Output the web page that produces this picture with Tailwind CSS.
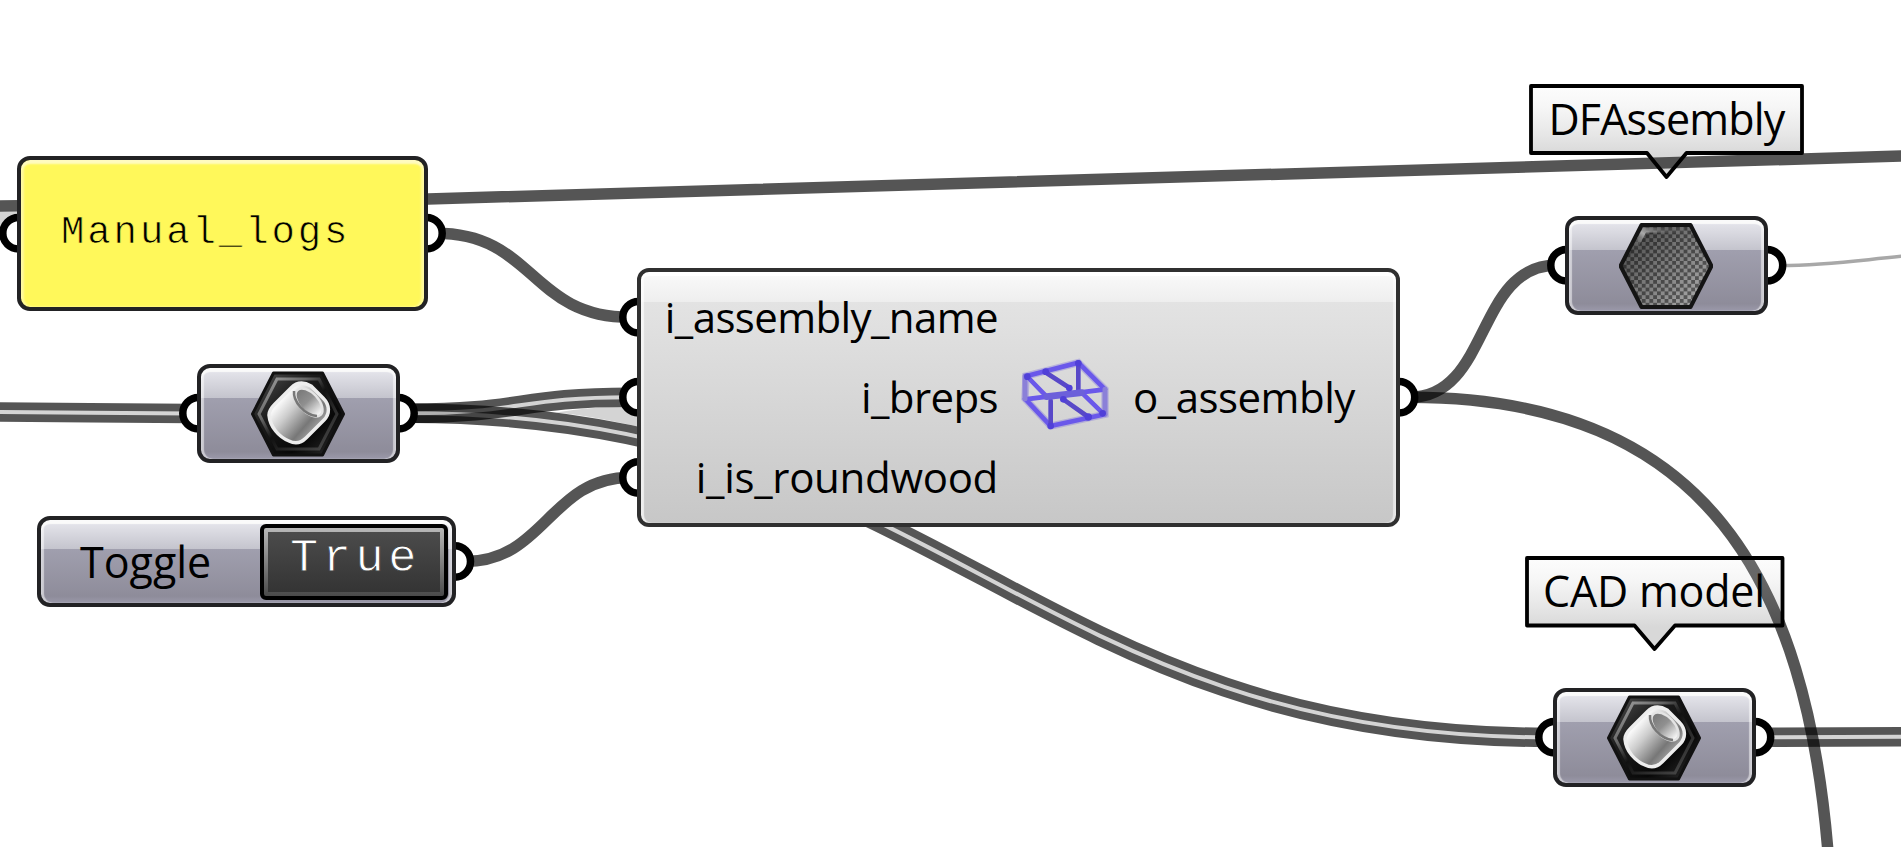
<!DOCTYPE html>
<html lang="en">
<head>
<meta charset="utf-8">
<title>Assembly graph</title>
<script src="https://cdn.jsdelivr.net/npm/@tailwindcss/browser@4"></script>
</head>
<body class="bg-white overflow-hidden">
<main class="relative w-[1901px] h-[847px] overflow-hidden bg-white text-black font-['Open_Sans','Noto_Sans',sans-serif]">

  <!-- wires and grips -->
  <svg class="absolute inset-0" width="1901" height="847" viewBox="0 0 1901 847" fill="none">
    <defs>
      <path id="w1" d="M-10 412 C60 412 120 413.500 190 413.500"/>
      <path id="w2" d="M410 413.300 C520 413.300 520 397.300 630 397.300"/>
      <path id="w3" d="M410 413.300 C940 413.300 1026 737.300 1546 737.300"/>
      <path id="w4" d="M1766 737.300 L1910 736.700"/>
      <mask id="m1" maskUnits="userSpaceOnUse" x="0" y="0" width="1901" height="847"><use href="#w1" stroke="#fff" stroke-width="19.500"/><use href="#w1" stroke="#404040" stroke-width="4"/></mask>
      <mask id="m2" maskUnits="userSpaceOnUse" x="0" y="0" width="1901" height="847"><use href="#w2" stroke="#fff" stroke-width="19.500"/><use href="#w2" stroke="#404040" stroke-width="4"/></mask>
      <mask id="m3" maskUnits="userSpaceOnUse" x="0" y="0" width="1901" height="847"><use href="#w3" stroke="#fff" stroke-width="19.500"/><use href="#w3" stroke="#404040" stroke-width="4"/></mask>
      <mask id="m4" maskUnits="userSpaceOnUse" x="0" y="0" width="1901" height="847"><use href="#w4" stroke="#fff" stroke-width="19.500"/><use href="#w4" stroke="#404040" stroke-width="4"/></mask>
    </defs>
    <path d="M0 211.500H18V240H0Z" fill="#d4d4d4"/>
    <path d="M556 412.500 C580 408.500 600 407 625 406.700 L640 418 V427 C610 420 580 415 556 412.500Z" fill="#d4d4d4"/>
    <g fill="#000" fill-opacity=".667">
      <rect width="1901" height="847" mask="url(#m1)"/>
      <rect width="1901" height="847" mask="url(#m2)"/>
      <rect width="1901" height="847" mask="url(#m3)"/>
      <rect width="1901" height="847" mask="url(#m4)"/>
    </g>
    <g stroke="#000" stroke-opacity=".667" stroke-width="11.500">
      <path d="M-5 206 L200 203.500 L428 199 L1500 167.700 L1905 156"/>
      <path d="M436 233.300 C535 233.300 530 317.300 630 317.300"/>
      <path d="M465 561.500 C545 561.500 550 477.500 630 477.500"/>
      <path d="M1410 397.300 C1490 397.300 1476 265.300 1556 265.300"/>
      <path d="M1410 397.300 C1709 397.300 1806 585 1828 852"/>
    </g>
    <path d="M1780 265.500 C1830 265.500 1860 260 1905 256" stroke="#a8a8a8" stroke-width="3.500"/>
    <g fill="#fff" stroke="#000" stroke-width="7.500">
      <circle cx="18.500" cy="233.300" r="15.700"/><circle cx="426.500" cy="233.300" r="15.700"/>
      <circle cx="198.500" cy="413.300" r="15.700"/><circle cx="398.500" cy="413.300" r="15.700"/>
      <circle cx="454.800" cy="561.500" r="15.700"/>
      <circle cx="638.500" cy="317.300" r="15.700"/><circle cx="638.500" cy="397.300" r="15.700"/><circle cx="638.500" cy="477.500" r="15.700"/>
      <circle cx="1399" cy="397.300" r="15.700"/>
      <circle cx="1566.500" cy="265.300" r="15.700"/><circle cx="1767" cy="265.300" r="15.700"/>
      <circle cx="1554.500" cy="737.300" r="15.700"/><circle cx="1755" cy="737.300" r="15.700"/>
    </g>
  </svg>

  <!-- panel -->
  <section class="absolute left-[17px] top-[156px] w-[411px] h-[155px] rounded-[13px] border-4 border-[#222224] bg-[#fff85a] shadow-[inset_0_4px_2px_#fffbc0,inset_3px_0_2px_#fffa98,inset_-3px_0_2px_#fffa98] flex items-center pl-[40px]">
    <span class="font-['Liberation_Mono',monospace] text-[39px] tracking-[2.900px] leading-none -mt-[1px] [-webkit-text-stroke:0.7px_#fff85a]">Manual_logs</span>
  </section>

  <!-- brep parameter -->
  <section class="absolute left-[197px] top-[364px] w-[203px] h-[99px] rounded-[13px] border-4 border-[#222224] bg-[linear-gradient(#e8e8ee_0%,#c4c4cd_33%,#a09fae_33%,#8e8c9a_92%,#9b99aa_100%)] shadow-[inset_0_4px_1px_#fafafa,inset_3px_0_1px_#ffffff88,inset_-3px_0_1px_#ffffff88] flex items-center justify-center">
    <svg class="shrink-0 -ml-[2px]" width="94" height="86" viewBox="0 0 94 86">
      <defs>
        <linearGradient id="hx" x1="0" y1="0" x2="1" y2="1"><stop offset="0" stop-color="#555"/><stop offset=".35" stop-color="#1c1c1c"/><stop offset=".7" stop-color="#080808"/><stop offset="1" stop-color="#333"/></linearGradient>
        <linearGradient id="rim" x1="0" y1="0" x2="1" y2="1"><stop offset="0" stop-color="#aaa"/><stop offset=".3" stop-color="#666"/><stop offset=".5" stop-color="#111"/><stop offset="1" stop-color="#505050"/></linearGradient>
        <linearGradient id="cy" gradientUnits="userSpaceOnUse" x1="24" y1="34" x2="58" y2="64"><stop offset="0" stop-color="#fff"/><stop offset=".35" stop-color="#ccc"/><stop offset=".8" stop-color="#777"/><stop offset="1" stop-color="#999"/></linearGradient>
        <linearGradient id="op" x1="0" y1="0" x2="1" y2="0"><stop offset="0" stop-color="#777"/><stop offset=".45" stop-color="#909090"/><stop offset="1" stop-color="#fff"/></linearGradient>
        <g id="brep">
          <path d="M22.500 2 H71.500 L92.500 43 L71.500 84 H22.500 L1.500 43Z" fill="url(#hx)" stroke="#111" stroke-width="3" stroke-linejoin="round"/>
          <path d="M26 8 H68 L86 43 L68 78 H26 L8 43Z" fill="none" stroke="url(#rim)" stroke-width="3"/>
          <path d="M18 44 C18 39 21 36 24 33 L40 17 C46 11 53 11 60 15 L72 27 C79 34 79 43 73 49 L55 67 C50 72 44 73 38 70 C28 66 19 56 18 44Z" fill="url(#cy)" stroke="#ededed" stroke-width="3.500"/>
          <ellipse cx="58" cy="31.500" rx="17" ry="9.500" transform="rotate(47 58 31.500)" fill="url(#op)" stroke="#e4e4e4" stroke-width="2.500"/>
          <path d="M43 20 C42 30 53 44 66 45" fill="none" stroke="#777" stroke-width="2.500"/>
        </g>
      </defs>
      <use href="#brep"/>
    </svg>
  </section>

  <!-- boolean toggle -->
  <section class="absolute left-[37px] top-[516px] w-[419px] h-[91px] rounded-[13px] border-4 border-[#222224] bg-[linear-gradient(#e8e8ee_0%,#c4c4cd_35%,#a09fae_35%,#8e8c9a_92%,#9b99aa_100%)] shadow-[inset_0_4px_1px_#fafafa,inset_3px_0_1px_#ffffff88,inset_-3px_0_1px_#ffffff88] flex items-center justify-between pl-[39px] pr-[4px]">
    <span class="text-[43px] leading-none">Toggle</span>
    <div class="w-[188px] h-[76px] rounded-[6px] border-4 border-black bg-[linear-gradient(#b8b8b8,#4a4a4a)] p-[4px]">
      <div class="w-full h-full bg-[linear-gradient(#4b4b4b,#343434)] text-white flex justify-center">
        <span class="font-['Liberation_Mono',monospace] text-[47px] tracking-[4.600px] leading-none pl-[3px] mt-[3px] [-webkit-text-stroke:0.8px_#404040]">True</span>
      </div>
    </div>
  </section>

  <!-- assembly component -->
  <section class="absolute left-[637px] top-[268px] w-[763px] h-[259px] rounded-[12px] border-4 border-[#303030] bg-[linear-gradient(#fafafa_0%,#eeeeee_12%,#e3e3e3_12%,#c7c7c7_100%)] shadow-[inset_0_4px_1px_#ffffff,inset_3px_0_1px_#ffffffaa,inset_-3px_0_1px_#ffffff88] flex items-center text-[42px] leading-none">
    <div class="w-[357px] h-[240px] -mt-[2px] flex flex-col items-end justify-around">
      <span class="tracking-[-0.6px]">i_assembly_name</span>
      <span class="tracking-[-0.6px]">i_breps</span>
      <span class="tracking-[-0.3px]">i_is_roundwood</span>
    </div>
    <svg class="ml-[12px] -mt-[8px] w-[110px] h-[95px] shrink-0" viewBox="0 0 330 285" fill="none" stroke-linecap="round">
      <g stroke="#5a48e0" stroke-opacity=".28" stroke-width="22"><path d="M48 90 L205 50 L285 130 V205 L122 240 L45 158Z"/></g>
      <g stroke="#6a58ea" stroke-width="14">
        <path d="M50 90 L205 50 L285 130 M285 205 L122 240 L45 158 M50 90 L110 152 M215 140 L282 205 M45 160 L285 130"/>
        <path d="M45 90 V158 M285 130 V205" stroke="#8b80d8" stroke-width="15"/>
        <path d="M122 164 V240 M205 50 V135 M105 78 L178 125 M160 160 L235 213" stroke="#5848c8"/>
        <path d="M110 152 L215 140" stroke-width="20" stroke="#6c60da"/>
      </g>
      <g fill="#5040d8"><circle cx="52" cy="92" r="10"/><circle cx="107" cy="77" r="10"/><circle cx="205" cy="52" r="10"/><circle cx="178" cy="126" r="10"/><circle cx="160" cy="160" r="10"/><circle cx="235" cy="213" r="11"/><circle cx="278" cy="202" r="10"/><circle cx="122" cy="240" r="10"/></g>
    </svg>
    <span class="ml-[13px] -mt-[2px] tracking-[-0.5px]">o_assembly</span>
  </section>

  <!-- generic data parameter -->
  <section class="absolute left-[1565px] top-[216px] w-[203px] h-[99px] rounded-[13px] border-4 border-[#222224] bg-[linear-gradient(#e8e8ee_0%,#c4c4cd_33%,#a09fae_33%,#8e8c9a_92%,#9b99aa_100%)] shadow-[inset_0_4px_1px_#fafafa,inset_3px_0_1px_#ffffff88,inset_-3px_0_1px_#ffffff88] flex items-center justify-center">
    <svg class="shrink-0 -ml-[2px]" width="94" height="86" viewBox="0 0 94 86">
      <defs>
        <pattern id="chk" width="7.600" height="7.600" patternUnits="userSpaceOnUse"><rect width="3.800" height="3.800" fill="#000" fill-opacity=".45"/><rect x="3.800" y="3.800" width="3.800" height="3.800" fill="#000" fill-opacity=".45"/></pattern>
        <linearGradient id="gr" x1=".1" y1=".2" x2=".9" y2=".9"><stop offset="0" stop-color="#505050"/><stop offset=".4" stop-color="#777"/><stop offset="1" stop-color="#a8a8a8"/></linearGradient>
        <linearGradient id="sh" x1="0" y1=".6" x2=".7" y2="0"><stop offset="0" stop-color="#555" stop-opacity="0"/><stop offset=".55" stop-color="#aaa"/><stop offset="1" stop-color="#777" stop-opacity=".2"/></linearGradient>
      </defs>
      <path d="M22.500 2 H71.500 L92.500 43 L71.500 84 H22.500 L1.500 43Z" fill="url(#gr)"/>
      <path d="M22.500 2 H71.500 L92.500 43 L71.500 84 H22.500 L1.500 43Z" fill="url(#chk)" stroke="#141414" stroke-width="4" stroke-linejoin="round"/>
      <path d="M10 36 L25.500 7 H66" fill="none" stroke="url(#sh)" stroke-width="5"/>
    </svg>
  </section>

  <!-- CAD model parameter -->
  <section class="absolute left-[1553px] top-[688px] w-[203px] h-[99px] rounded-[13px] border-4 border-[#222224] bg-[linear-gradient(#e8e8ee_0%,#c4c4cd_33%,#a09fae_33%,#8e8c9a_92%,#9b99aa_100%)] shadow-[inset_0_4px_1px_#fafafa,inset_3px_0_1px_#ffffff88,inset_-3px_0_1px_#ffffff88] flex items-center justify-center">
    <svg class="shrink-0 -ml-[2px]" width="94" height="86" viewBox="0 0 94 86"><use href="#brep"/></svg>
  </section>

  <!-- callouts -->
  <div class="absolute left-[1529px] top-[84px] w-[275px] h-[96px]">
    <svg class="absolute inset-0" width="275" height="96" viewBox="0 0 275 96">
      <defs><linearGradient id="tag" gradientUnits="userSpaceOnUse" x1="0" y1="0" x2="0" y2="71"><stop offset="0" stop-color="#f0f0f0" stop-opacity=".13"/><stop offset=".3" stop-color="#c8c8c8" stop-opacity=".15"/><stop offset="1" stop-color="#3c3c3c" stop-opacity=".2"/></linearGradient></defs>
      <path d="M2 2 H273 V69 H157.500 L137.500 93 L118 69 H2Z" fill="url(#tag)" stroke="#000" stroke-width="3.800" stroke-linejoin="round"/>
    </svg>
    <div class="relative h-[69px] flex items-center justify-center text-[43px] leading-none tracking-[-0.8px]"><span>DFAssembly</span></div>
  </div>
  <div class="absolute left-[1525px] top-[556px] w-[260px] h-[97px]">
    <svg class="absolute inset-0" width="260" height="97" viewBox="0 0 260 97">
      <path d="M2 2 H257.500 V69.500 H150 L129.500 93 L109.500 69.500 H2Z" fill="url(#tag)" stroke="#000" stroke-width="3.800" stroke-linejoin="round"/>
    </svg>
    <div class="relative h-[69px] flex items-center justify-center pr-[2px] text-[43px] leading-none tracking-[-0.2px]"><span>CAD model</span></div>
  </div>
</main>
</body>
</html>
